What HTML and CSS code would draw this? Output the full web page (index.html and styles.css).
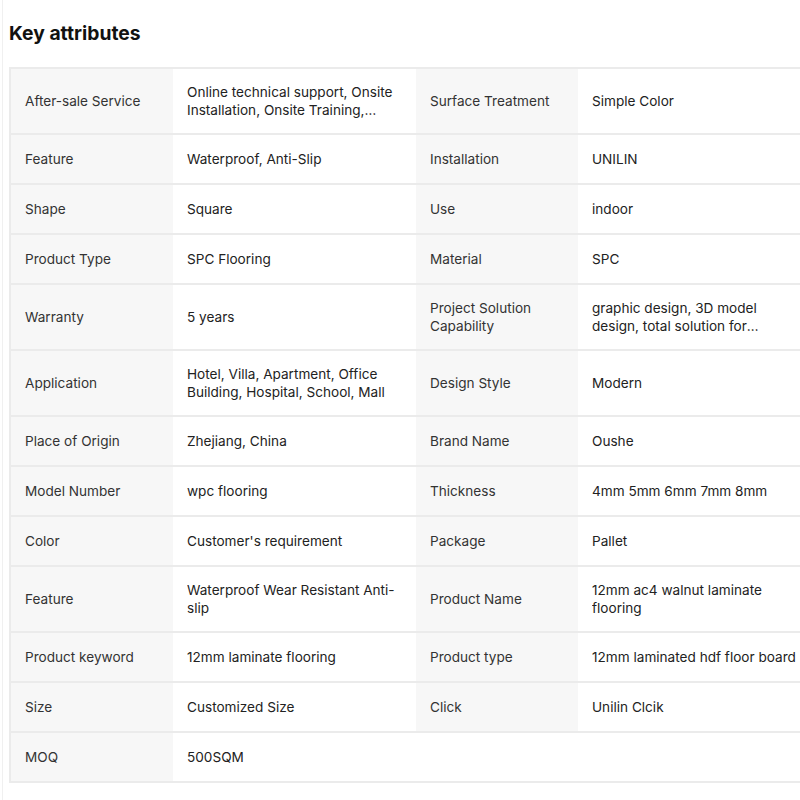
FILE: index.html
```html
<!DOCTYPE html>
<html>
<head>
<meta charset="utf-8">
<link rel="stylesheet" href="styles.css">
</head>
<body>
<div class="page">
  <h2 class="title">Key attributes</h2>
  <table class="attrs">
    <colgroup>
      <col class="c-label1"><col class="c-val1"><col class="c-label2"><col class="c-val2">
    </colgroup>
    <tbody>
      <tr>
        <td class="lbl">After-sale Service</td>
        <td class="val"><div class="clamp">Online technical support, Onsite Installation, Onsite Training,…</div></td>
        <td class="lbl">Surface Treatment</td>
        <td class="val">Simple Color</td>
      </tr>
      <tr><td class="lbl">Feature</td><td class="val">Waterproof, Anti-Slip</td><td class="lbl">Installation</td><td class="val">UNILIN</td></tr>
      <tr><td class="lbl">Shape</td><td class="val">Square</td><td class="lbl">Use</td><td class="val">indoor</td></tr>
      <tr><td class="lbl">Product Type</td><td class="val">SPC Flooring</td><td class="lbl">Material</td><td class="val">SPC</td></tr>
      <tr>
        <td class="lbl">Warranty</td><td class="val">5 years</td>
        <td class="lbl">Project Solution Capability</td>
        <td class="val"><div class="clamp">graphic design, 3D model design, total solution for projects, Cross Categories Consolidation</div></td>
      </tr>
      <tr><td class="lbl">Application</td><td class="val"><div class="clamp">Hotel, Villa, Apartment, Office Building, Hospital, School, Mall</div></td><td class="lbl">Design Style</td><td class="val">Modern</td></tr>
      <tr><td class="lbl">Place of Origin</td><td class="val">Zhejiang, China</td><td class="lbl">Brand Name</td><td class="val">Oushe</td></tr>
      <tr><td class="lbl">Model Number</td><td class="val">wpc flooring</td><td class="lbl">Thickness</td><td class="val">4mm 5mm 6mm 7mm 8mm</td></tr>
      <tr><td class="lbl">Color</td><td class="val">Customer's requirement</td><td class="lbl">Package</td><td class="val">Pallet</td></tr>
      <tr><td class="lbl">Feature</td><td class="val"><div class="clamp">Waterproof Wear Resistant Anti-slip</div></td><td class="lbl">Product Name</td><td class="val"><div class="clamp">12mm ac4 walnut laminate flooring</div></td></tr>
      <tr><td class="lbl">Product keyword</td><td class="val">12mm laminate flooring</td><td class="lbl">Product type</td><td class="val">12mm laminated hdf floor board</td></tr>
      <tr><td class="lbl">Size</td><td class="val">Customized Size</td><td class="lbl">Click</td><td class="val">Unilin Clcik</td></tr>
      <tr><td class="lbl">MOQ</td><td class="val">500SQM</td><td class="empty"></td><td class="empty"></td></tr>
    </tbody>
  </table>
</div>
</body>
</html>
```
FILE: styles.css
```css
html, body {
  margin: 0;
  padding: 0;
  background: #fff;
  overflow: hidden;
}
body {
  font-family: Inter, "Noto Sans", sans-serif;
  color: #222;
  border-left: 1px solid #f0f0f0;
  margin-left: 2px;
  min-height: 800px;
}
.page {
  padding: 19px 0 0 6px;
  width: 830px;
}
.title {
  margin: 0 0 20px 0;
  font-size: 19.3px;
  line-height: 28px;
  font-weight: 700;
  color: #111;
}
.attrs {
  border-collapse: collapse;
  table-layout: fixed;
  width: 811px;
  font-size: 13.6px;
  line-height: 18px;
  border: 2px solid #ebebeb;
}
.c-label1 { width: 163px; }
.c-val1 { width: 243px; }
.c-label2 { width: 162px; }
.c-val2 { width: 243px; }
.attrs td {
  border-top: 2px solid #ebebeb;
  border-bottom: 2px solid #ebebeb;
  padding: 14px 14px;
  height: 20px;
  vertical-align: middle;
}
.lbl {
  background: #f7f7f7;
  color: #333;
}
.val {
  background: #fff;
  color: #222;
}
.empty { background: #fff; }
.clamp {
  display: -webkit-box;
  -webkit-line-clamp: 2;
  -webkit-box-orient: vertical;
  overflow: hidden;
}
```
